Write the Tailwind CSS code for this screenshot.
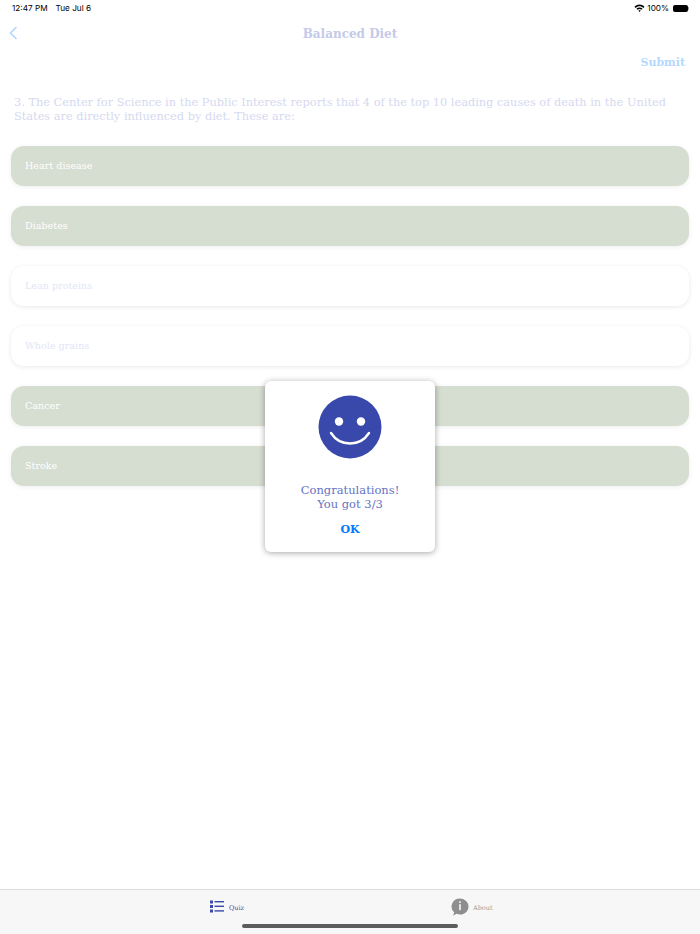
<!DOCTYPE html>
<html lang="en">
<head>
  <meta charset="UTF-8">
  <meta name="viewport" content="width=device-width, initial-scale=1.0">
  <title>Balanced Diet</title>
  <script src="https://cdn.jsdelivr.net/npm/@tailwindcss/browser@4"></script>
</head>
<body class="bg-white font-['DejaVu_Serif',serif]">
  <div class="relative w-[700px] h-[934px] overflow-hidden flex flex-col">
    <!-- status bar -->
    <div class="h-[17px] flex items-center justify-between pl-[12px] pr-[11px] font-['Inter',sans-serif] text-[8.2px] text-black">
      <div class="flex gap-[8px]"><span>12:47 PM</span><span>Tue Jul 6</span></div>
      <div class="flex items-center gap-[2px]">
        <svg width="11" height="8" viewBox="0 0 11 8"><path d="M0.5 2.8 C3.5 -0.2 7.5 -0.2 10.5 2.8 L9.4 3.9 C7 1.6 4 1.6 1.6 3.9 Z M2.4 4.7 C4.2 3 6.8 3 8.6 4.7 L7.5 5.8 C6.3 4.7 4.7 4.7 3.5 5.8 Z M4.3 6.6 C5 6 6 6 6.7 6.6 L5.5 7.9 Z" fill="#000"/></svg>
        <span>100%</span>
        <div class="flex items-center ml-[2px]">
          <div class="w-[15px] h-[7px] rounded-[2px] bg-black"></div>
          <div class="w-[1px] h-[3px] bg-gray-400"></div>
        </div>
      </div>
    </div>
    <!-- nav bar -->
    <div class="relative h-[32px] flex items-center justify-center">
      <svg class="absolute left-[9px] top-[9px]" width="9" height="14" viewBox="0 0 9 14" fill="none"><path d="M7.5 1 L1.5 7 L7.5 13" stroke="#b3d7ff" stroke-width="1.6"/></svg>
      <span class="mt-[1px] text-[12px] font-bold text-[#c5cae9]">Balanced Diet</span>
    </div>
    <div class="h-[27px] flex items-center justify-end pr-[15px]">
      <span class="mt-[2px] text-[11px] font-bold text-[#b3d9ff]">Submit</span>
    </div>
    <!-- question -->
    <p class="mt-[19px] px-[14px] text-[11.35px] leading-[14px] text-[#d5d9f0]">3. The Center for Science in the Public Interest reports that 4 of the top 10 leading causes of death in the United States are directly influenced by diet. These are:</p>
    <!-- answers -->
    <div class="mt-[23px] px-[11px] flex flex-col gap-[20px]">
      <div class="h-[40px] flex items-center pl-[14px] rounded-[13px] bg-[#d6ddd1] text-white text-[9.6px] shadow-[0_1px_5px_rgba(0,0,0,0.07)]">Heart disease</div>
      <div class="h-[40px] flex items-center pl-[14px] rounded-[13px] bg-[#d6ddd1] text-white text-[9.6px] shadow-[0_1px_5px_rgba(0,0,0,0.07)]">Diabetes</div>
      <div class="h-[40px] flex items-center pl-[14px] rounded-[13px] bg-white text-[#e3e5f7] text-[9.6px] shadow-[0_1px_5px_rgba(0,0,0,0.09)]">Lean proteins</div>
      <div class="h-[40px] flex items-center pl-[14px] rounded-[13px] bg-white text-[#e3e5f7] text-[9.6px] shadow-[0_1px_5px_rgba(0,0,0,0.09)]">Whole grains</div>
      <div class="h-[40px] flex items-center pl-[14px] rounded-[13px] bg-[#d6ddd1] text-white text-[9.6px] shadow-[0_1px_5px_rgba(0,0,0,0.07)]">Cancer</div>
      <div class="h-[40px] flex items-center pl-[14px] rounded-[13px] bg-[#d6ddd1] text-white text-[9.6px] shadow-[0_1px_5px_rgba(0,0,0,0.07)]">Stroke</div>
    </div>
    <!-- tab bar -->
    <div class="mt-auto h-[45px] bg-[#f7f7f7] border-t border-[#dcdcdc] flex">
      <div class="w-1/2 flex items-start pt-[10px] pl-[210px]">
        <svg width="14" height="13" viewBox="0 0 14 13" fill="#3949ab"><rect x="0" y="0.5" width="3" height="3"/><rect x="0" y="5" width="3" height="3"/><rect x="0" y="9.5" width="3" height="3"/><rect x="4.5" y="1" width="9.5" height="1.4"/><rect x="4.5" y="5.6" width="9.5" height="1.4"/><rect x="4.5" y="10.2" width="9.5" height="1.4"/></svg>
        <span class="ml-[5px] mt-[4px] text-[6.5px] text-[#3949ab]">Quiz</span>
      </div>
      <div class="w-1/2 flex items-start pt-[8px] pl-[101px]">
        <svg width="18" height="18" viewBox="0 0 18 18"><path d="M9 0.5 A8.5 8 0 1 1 5.5 15.8 C4.5 16.6 3 17.4 1.6 17.4 C2.6 16.4 3.2 15.2 3.1 14.2 A8.5 8 0 0 1 9 0.5 Z" fill="#8e8e8e"/><rect x="8.2" y="3.2" width="1.6" height="1.7" fill="#f7f7f7"/><rect x="8.2" y="6.2" width="1.6" height="6" fill="#f7f7f7"/></svg>
        <span class="ml-[4px] mt-[6px] text-[6.5px] text-[#999]">About</span>
      </div>
    </div>
    <!-- home indicator -->
    <div class="absolute left-[242px] top-[924px] w-[216px] h-[4px] rounded-full bg-[#5c5c5c]"></div>
    <!-- dialog -->
    <div class="absolute left-[265px] top-[381px] w-[170px] h-[171px] bg-white rounded-[6px] shadow-[0_1px_6px_rgba(0,0,0,0.35)] flex flex-col items-center">
      <svg class="mt-[14px]" width="64" height="64" viewBox="0 0 64 64"><circle cx="32" cy="32" r="31.5" fill="#3949ab"/><circle cx="21" cy="26.5" r="4.2" fill="#fff"/><circle cx="43" cy="26.5" r="4.2" fill="#fff"/><path d="M13 38 C22 52 42 52 51 38" fill="none" stroke="#fff" stroke-width="2.4" stroke-linecap="round"/></svg>
      <p class="mt-[24px] text-center text-[11.5px] leading-[14px] text-[#6573c3]">Congratulations!<br>You got 3/3</p>
      <span class="mt-[11px] text-[11px] font-bold text-[#007aff]">OK</span>
    </div>
  </div>
</body>
</html>
